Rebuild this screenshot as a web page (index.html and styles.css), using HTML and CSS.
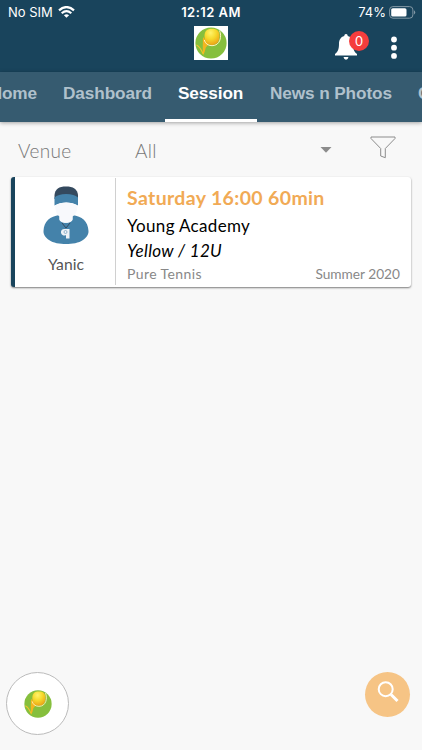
FILE: index.html
```html
<!DOCTYPE html>
<html lang="en">
<head>
<meta charset="utf-8">
<meta name="viewport" content="width=device-width, initial-scale=1">
<title>Session</title>
<link rel="stylesheet" href="styles.css">
</head>
<body>
<svg class="defs" width="0" height="0" aria-hidden="true">
  <defs>
    <radialGradient id="ball" cx="40%" cy="25%" r="75%"><stop offset="0" stop-color="#fff36c"/><stop offset=".5" stop-color="#f6da2c"/><stop offset="1" stop-color="#eda318"/></radialGradient>
    <symbol id="logo" viewBox="0 0 32 32">
      <circle cx="16" cy="16" r="15.6" fill="#86bf3d"/>
      <path d="M8 10Q7.500 20 8 28.500Q10 25 10.800 20.500L14 17Z" fill="#f3b51f"/>
      <path d="M1.500 18Q5 19.500 8.200 27" fill="none" stroke="#f0c52b" stroke-width="1.300"/>
      <path d="M9.500 9C9.500 4 12 1.800 17 1.800S24.500 4 24.500 9S22 18 17 18S9.500 14 9.500 9Z" fill="url(#ball)"/>
      <path d="M24.500 3.500C27 9 25.500 18.700 17 18.700C12.500 18.700 10 16 9.300 13" fill="none" stroke="#fff3bc" stroke-width="1"/>
    </symbol>
  </defs>
</svg>
<div class="app">
  <header class="top">
    <div class="status">
      <div class="carrier"><span class="sim">No SIM</span>
        <svg width="17" height="12" viewBox="0 0 17 12" fill="none" stroke="#fff" stroke-width="2.200"><path d="M1 4.300Q8.500-2.200 16 4.300M3.700 7.300Q8.500 3 13.300 7.300"/><path d="M8.500 11.700L5.900 9.200Q8.500 7.100 11.100 9.200Z" fill="#fff" stroke="none"/></svg>
      </div>
      <span class="clock">12:12 AM</span>
      <div class="power"><span class="percent">74%</span>
        <svg width="27" height="13" viewBox="0 0 27 13"><rect x=".6" y=".6" width="23.300" height="11.600" rx="3.300" fill="none" stroke="#8298a5"/><rect x="2.200" y="2.200" width="15.300" height="8.400" rx="1.600" fill="#fff"/><path d="M25 4.300Q27.500 6.400 25 8.500Z" fill="#8298a5"/></svg>
      </div>
    </div>
    <div class="bar">
      <div class="brand"><svg width="32" height="32"><use href="#logo"/></svg></div>
      <div class="actions">
        <div class="bell">
          <svg width="22" height="26" viewBox="0 0 22 26" fill="#fff"><path d="M11 0C9.500 0 9.300 1 9.300 2C5.500 3 4 6 4 10C4 16 2.500 18 0 20V21.500H22V20C19.500 18 18 16 18 10C18 6 16.500 3 12.700 2C12.700 1 12.500 0 11 0Z"/><path d="M8.500 23H13.500Q13 25.700 11 25.700T8.500 23Z"/></svg>
          <span class="badge">0</span>
        </div>
        <svg class="more" width="6" height="24" viewBox="0 0 6 24" fill="#fff"><circle cx="3" cy="3.500" r="2.900"/><circle cx="3" cy="11.700" r="2.900"/><circle cx="3" cy="19.900" r="2.900"/></svg>
      </div>
    </div>
  </header>
  <nav class="tabs">
    <a class="tab home">Home</a>
    <a class="tab dash">Dashboard</a>
    <a class="tab active">Session</a>
    <a class="tab news">News n Photos</a>
    <a class="tab next">Calendar</a>
  </nav>
  <section class="filters">
    <span class="label">Venue</span>
    <div class="select"><span>All</span><svg width="12" height="6" viewBox="0 0 12 6"><path d="M.5 0H11.500L6 5.700Z" fill="#8c8c8c"/></svg></div>
    <svg class="funnel" width="26" height="23" viewBox="0 0 26 23" fill="none" stroke="#8c8c8c" stroke-width="1" stroke-linejoin="round"><path d="M1 1H25V2.500L15.300 12.500V21.700L10.700 20V12.500L1 2.500Z"/></svg>
  </section>
  <article class="card">
    <div class="coach">
      <svg width="46" height="60" viewBox="0 0 46 60">
        <path d="M11.500 14V10C12 4 16 1.500 23 1.500S34.500 4 35 10V14Z" fill="#34495e"/>
        <path d="M11.500 12.500Q15 9 23.200 9T35 12.500V20.500Q30 17.500 23.200 17.500T11.500 20.500Z" fill="#4482aa"/>
        <path d="M16.500 30C7 31.500 1 36 .5 46C.3 50 3 53 6 55C10 58 17 59 23 59S36 58 40 55C43 53 45.700 50 45.500 46C45 36 39 31.500 29.500 30V34C29.500 39 16.500 39 16.500 34Z" fill="#4482aa"/>
        <path d="M12 20.500Q17 17.500 23.200 17.500T34.500 20.500Q34 30 29.500 31.500V34C29.500 39 16.500 39 16.500 34V31.500Q12.500 29 12 20.500Z" fill="#f8f9fc"/>
        <path d="M19 38L23 43L27 38" fill="none" stroke="#34495e"/>
        <path d="M26.500 44V53.500H23V50A3.300 3.300 0 1 1 22 44Z" fill="#edf1f5"/><circle cx="22.500" cy="47" r="1.500" fill="none" stroke="#7ca4c2" stroke-width=".8"/>
      </svg>
      <span class="name">Yanic</span>
    </div>
    <div class="details">
      <h2>Saturday 16:00 60min</h2>
      <p class="academy">Young Academy</p>
      <p class="level">Yellow / 12U</p>
      <div class="foot"><span class="club">Pure Tennis</span><span class="term">Summer 2020</span></div>
    </div>
  </article>
  <footer class="floating">
    <div class="home-button"><svg width="28" height="28"><use href="#logo"/></svg></div>
    <div class="search"><svg width="22" height="22" viewBox="0 0 22 22" fill="none" stroke="#fff" stroke-width="2"><circle cx="8.700" cy="8.200" r="7"/><path d="M14 13.500L20.500 20" stroke-width="3"/></svg></div>
  </footer>
</div>
</body>
</html>
```
FILE: styles.css
```css
* { box-sizing: border-box; }
body { margin: 0; background: #f8f8f8; font-family: Lato, sans-serif; }
.defs { display: block; }
.app { width: 422px; height: 750px; overflow: hidden; display: flex; flex-direction: column; }
.top { height: 72px; flex: none; background: #19445c; color: #fff; font-family: Inter, sans-serif; }
.status { height: 24px; display: grid; grid-template-columns: 1fr auto 1fr; align-items: center; padding: 0 6px 0 8px; font-size: 13px; line-height: 24px; }
.carrier, .power { display: flex; align-items: center; gap: 5px; }
.power { justify-content: flex-end; gap: 3px; }
.clock { font-weight: 600; letter-spacing: .45px; margin-left: -2px; }
.bar { height: 48px; display: grid; grid-template-columns: 1fr 34px 1fr; }
.brand { grid-column: 2; width: 34px; height: 34px; margin-top: 2px; padding: 1px; background: #fff; }
.brand svg { display: block; }
.actions { display: flex; justify-content: flex-end; gap: 34px; padding: 10px 25px 0 0; }
.bell { position: relative; width: 22px; height: 26px; }
.badge { position: absolute; left: 14px; top: -3px; width: 20px; height: 20px; border-radius: 50%; background: #f53d3d; font: 13px/20px Lato, sans-serif; text-align: center; }
.more { flex: none; margin-top: 2px; }
.tabs { height: 50px; flex: none; display: flex; background: #365b70; box-shadow: 0 1px 4px rgba(0,0,0,.35); font: bold 17.2px/43px "Liberation Sans", sans-serif; color: #b0c1cc; white-space: nowrap; }
.tab { flex: none; height: 50px; padding: 0 13px; letter-spacing: -.1px; }
.home { width: 50px; display: flex; justify-content: flex-end; }
.dash { width: 115px; }
.active { width: 92px; color: #fff; border-bottom: 3px solid #fff; }
.news { width: 148px; }
.filters { height: 55px; flex: none; display: flex; align-items: center; padding: 1px 26px 0 18px; color: #777; font-size: 19px; font-weight: 300; letter-spacing: .3px; }
.label { width: 117px; }
.select { width: 197px; display: flex; align-items: center; justify-content: space-between; }
.funnel { margin-left: auto; margin-top: -5px; }
.card { width: 400px; height: 110px; flex: none; margin-left: 11px; display: flex; background: #fff; border-left: 4px solid #19445c; border-radius: 3px; box-shadow: 0 1px 2px rgba(0,0,0,.5); }
.coach { width: 101px; margin: 1px 0 2px; border-right: 1px solid #d0d0d0; display: flex; flex-direction: column; align-items: center; padding: 7px 0 0 2px; }
.coach svg { display: block; }
.name { font-size: 15.7px; line-height: 24px; margin-top: 7px; color: #555; }
.details { flex: 1; padding: 8px 11px 0 11px; white-space: nowrap; }
h2, p { margin: 0; }
h2 { font-size: 19.5px; line-height: 26px; font-weight: 700; letter-spacing: .35px; color: #f1aa55; }
.academy, .level { font-size: 17px; line-height: 24px; letter-spacing: .33px; color: #000; }
.level { font-style: italic; line-height: 25px; }
.academy { margin-top: 3px; }
.foot { display: flex; justify-content: space-between; font-size: 14px; line-height: 22px; color: #888; }
.club { letter-spacing: .4px; }
.term { font-size: 13.7px; }
.floating { margin-top: auto; display: flex; align-items: flex-start; justify-content: space-between; height: 78px; padding: 0 12px 0 6px; }
.home-button { width: 63px; height: 63px; border: 1px solid #bbb; border-radius: 50%; background: #fff; display: grid; place-items: center; }
.search { width: 45px; height: 45px; border-radius: 50%; background: #f6c485; display: flex; justify-content: center; padding-top: 9px; }
```
